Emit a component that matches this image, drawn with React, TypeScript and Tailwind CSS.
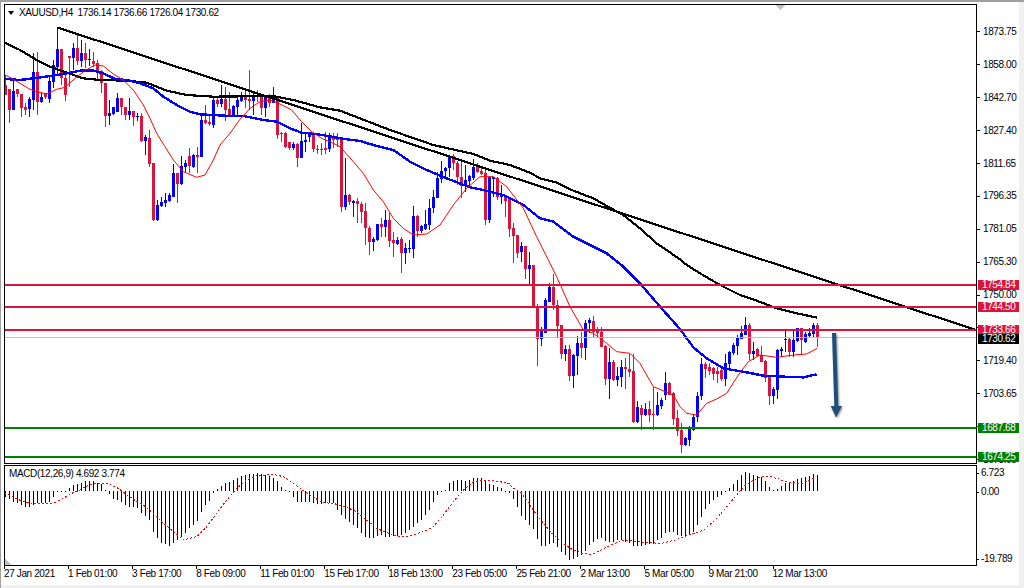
// XAUUSD H4 chart window. Candle and line data were read off the 3x crops, so every
// series keeps those crop coordinates and is shifted to the page through its offset.
type Candle = [number, number, number, number, 'r' | 'b'];

const CRIMSON = '#dc143c';
const BLUE = '#0000ff';

// top of body, bottom of body, high, low, colour
const CANDLES_A: Candle[] = [
  [255,285,225,285,'r'],[268,330,268,368,'r'],[272,330,240,330,'b'],[268,282,268,290,'r'],[282,325,282,350,'r'],
  [322,330,310,345,'r'],[298,328,290,350,'b'],[216,300,160,330,'b'],[216,305,155,345,'r'],[292,305,280,310,'b'],
  [280,292,278,298,'r'],[244,298,230,310,'b'],[196,245,180,265,'b'],[148,200,82,225,'b'],[148,235,148,255,'r'],
  [235,285,220,302,'r'],[168,173,168,262,'r'],[143,175,130,210,'b'],[143,182,105,195,'r'],[158,182,120,200,'b'],
  [158,180,130,205,'r'],[177,180,148,198,'b'],[182,192,155,200,'r'],[190,212,180,240,'r'],[212,250,210,280,'r'],
  [250,348,250,380,'r'],[340,348,300,375,'b'],[320,342,320,345,'b'],[293,335,278,335,'b'],[293,320,293,345,'r'],
  [320,345,320,360,'r'],[332,345,295,360,'b'],[333,350,333,378,'r'],[347,350,340,362,'b'],[347,422,340,425,'r'],
  [412,422,405,465,'b'],[415,492,390,500,'r'],[490,660,490,662,'r'],[615,660,600,662,'b'],[605,618,590,622,'b'],
  [600,610,578,620,'b'],[585,603,580,605,'b'],[520,590,492,590,'b'],[518,552,518,608,'r'],[497,552,467,555,'b'],
  [488,500,480,515,'b'],[468,498,445,518,'r'],[465,500,462,505,'b'],[465,470,440,520,'r'],[360,470,345,472,'b'],
  [360,368,315,372,'r'],[365,372,345,378,'r'],[300,375,290,385,'b'],[300,312,290,322,'r'],[298,312,255,322,'b'],
  [298,330,262,362,'r'],[328,348,275,350,'r'],[318,348,315,350,'b'],[300,320,290,345,'b'],[286,302,275,305,'b'],
  [285,300,268,325,'r'],[297,302,210,330,'r'],[285,302,275,345,'b'],[285,288,270,305,'r'],[285,323,285,345,'r'],
  [290,323,285,350,'b'],[290,308,283,320,'r'],[292,308,262,310,'b'],[292,405,292,418,'r'],[400,403,395,425,'r'],
  [400,442,395,445,'r'],[425,445,425,450,'r'],[432,445,425,450,'b'],[432,475,430,500,'r'],[422,475,368,475,'b'],
  [420,425,395,455,'b'],[400,412,395,425,'b'],[400,447,395,455,'r'],[446,450,435,462,'r'],[448,450,430,465,'r'],
  [445,450,395,462,'r'],[408,447,400,455,'b'],[415,420,400,445,'r'],[415,420,400,440,'r'],
];
const CANDLES_B: Candle[] = [
  [30,232,25,245,'r'],[195,232,85,240,'b'],[195,215,192,225,'r'],[212,218,210,262,'b'],[213,222,205,280,'r'],
  [222,245,215,280,'r'],[243,295,218,345,'r'],[294,335,288,375,'r'],[327,335,320,362,'b'],[283,330,283,332,'b'],
  [283,290,265,320,'r'],[270,290,240,320,'b'],[270,333,248,350,'r'],[330,340,305,380,'r'],[330,342,322,345,'b'],
  [328,368,322,430,'r'],[355,368,340,402,'b'],[355,358,330,368,'b'],[258,356,228,385,'b'],[258,303,255,320,'r'],
  [288,303,285,310,'b'],[282,296,240,300,'b'],[235,285,208,300,'b'],[202,235,180,248,'b'],[145,205,125,205,'b'],
  [122,147,93,160,'b'],[114,122,112,140,'b'],[78,115,75,140,'b'],[78,100,72,120,'r'],[100,140,92,165,'r'],
  [140,168,92,205,'r'],[150,167,105,185,'b'],[138,152,135,170,'b'],[110,145,87,150,'b'],[106,125,100,130,'r'],
  [122,132,112,135,'r'],[130,270,110,285,'r'],[142,270,140,280,'b'],[142,146,140,200,'b'],[143,200,140,210,'r'],
  [197,200,165,222,'b'],[197,212,197,260,'r'],[208,297,208,320,'r'],[295,317,280,398,'r'],[315,368,315,385,'r'],
  [348,365,335,395,'b'],[348,416,348,447,'r'],[405,416,365,465,'b'],[405,530,405,530,'r'],[528,626,522,708,'r'],
  [596,626,590,648,'b'],[510,608,505,610,'b'],[472,515,458,515,'b'],[472,525,432,540,'r'],[525,588,510,620,'r'],
  [585,672,585,687,'r'],[657,672,645,692,'b'],[657,738,645,752,'r'],[675,738,672,773,'b'],[640,678,618,735,'b'],
  [640,653,605,685,'r'],[580,655,570,690,'b'],[570,580,565,608,'b'],[573,605,558,625,'r'],[603,608,590,625,'r'],
  [605,650,590,650,'r'],[648,746,645,765,'r'],[697,748,655,806,'b'],[697,750,690,752,'r'],[738,750,712,768,'b'],
  [712,740,690,770,'b'],[712,718,685,778,'r'],[717,725,672,740,'r'],[722,876,672,880,'r'],[832,876,812,878,'b'],
  [835,855,825,900,'r'],[838,855,818,858,'b'],[838,855,812,875,'r'],[852,855,770,900,'r'],[825,855,785,858,'b'],
  [810,827,805,838,'b'],[760,795,727,810,'b'],[760,795,755,795,'r'],[790,867,787,885,'r'],[865,903,840,918,'r'],
];
const CANDLES_C: Candle[] = [
  [510,555,488,578,'r'],[535,555,530,558,'b'],[500,540,498,558,'b'],[470,510,465,513,'b'],[408,472,395,485,'b'],
  [312,408,295,420,'b'],[312,328,305,355,'r'],[322,332,310,345,'r'],[325,342,320,360,'r'],[333,342,320,368,'r'],
  [330,358,320,362,'r'],[310,358,282,378,'b'],[275,312,272,325,'b'],[255,278,250,285,'b'],[235,258,225,285,'b'],
  [220,236,198,238,'b'],[195,224,170,225,'b'],[195,282,190,300,'r'],[272,282,245,300,'b'],[268,288,265,290,'r'],
  [285,305,258,305,'r'],[302,355,300,365,'r'],[350,408,350,435,'r'],[388,408,380,432,'b'],[270,390,268,418,'b'],
  [268,272,262,290,'b'],[238,241,207,275,'b'],[238,275,230,290,'r'],[240,275,212,290,'b'],[205,242,205,245,'b'],
  [205,240,205,285,'r'],[222,245,215,248,'b'],[220,228,205,235,'b'],[195,222,188,235,'b'],[195,235,190,260,'r'],
];

const HIST_A = [
  112,118,125,130,135,140,140,135,130,130,
  128,125,110,96,94,94,85,75,72,68,
  64,64,64,68,72,90,102,118,120,125,
  135,140,142,145,158,168,180,215,235,248,
  252,258,250,240,232,220,205,195,182,155,
  135,122,100,86,78,68,65,60,55,48,
  45,42,42,40,42,45,48,55,62,80,
  90,96,110,125,125,125,125,130,133,133,
  130,128,130,150,165,178,185,195,205,220,
  232,233,233,228,226,230,230,228,228,225,
  220,210,200,190,180,165,150,125,105,94,
  90,70,62,60,60,62,60,55,55,55,
  60,72,75,80,85,92,100,
];
const HIST_B = [
  118,140,168,180,195,207,237,258,258,252,
  250,260,275,285,300,298,290,285,272,255,
  245,238,235,243,245,245,240,240,245,250,
  258,258,258,255,252,252,240,235,220,215,
  215,225,228,228,222,215,195,170,148,133,
  120,112,105,94,83,72,60,45,36,40,
  44,48,50,62,80,90,86,77,70,67,
  63,57,55,52,48,42,44,
];

function pts(list: number[][], ox: number, oy: number): string {
  return list.map(([x, y]) => `${ox + x / 3},${oy + y / 3}`).join(' ');
}

const EMA_FAST = [
  pts([[15,225],[35,235],[60,250],[90,268],[110,275],[140,282],[170,268],[195,262],[225,235],[255,212],[285,195],[310,198],[340,222],[370,240],[400,270],[430,315],[450,355],[470,400],[495,440],[520,480],[550,515],[590,532],[615,525],[640,480],[660,435],[690,400],[720,358],[750,325],[780,305],[810,300],[840,312],[875,330],[905,365],[935,395],[965,415],[1000,430],[1020,440]], 0, 0),
  pts([[40,95],[70,130],[100,180],[130,215],[160,265],[190,295],[220,315],[260,312],[300,285],[340,225],[380,175],[420,140],[460,140],[500,170],[550,235],[590,320],[610,360],[650,440],[690,530],[730,600],[760,610],[800,640],[830,665],[870,670],[900,700],[940,770],[1000,795],[1020,830]], 340, 130),
  pts([[20,460],[50,465],[80,430],[110,417],[140,400],[175,345],[205,305],[240,285],[290,292],[340,285],[380,282],[412,265]], 680, 260),
].join(' ');

const EMA_MID = [
  pts([[15,237],[60,240],[100,235],[150,228],[190,222],[240,212],[280,212],[310,220],[345,237],[380,240],[420,250],[460,265],[490,290],[530,315],[570,335],[600,343],[690,348],[730,348],[790,360],[830,365],[870,385],[905,398],[945,402],[985,408],[1020,415]], 0, 0),
  pts([[60,33],[100,45],[160,60],[210,95],[260,120],[320,145],[390,172],[430,180],[490,195],[550,225],[600,265],[640,275],[700,320],[750,345],[800,370],[850,410],[900,460],[960,530],[1020,597]], 340, 130),
  pts([[40,262],[80,295],[130,325],[200,337],[250,347],[310,350],[370,352],[410,343]], 680, 260),
].join(' ');

const EMA_SLOW = [
  pts([[15,128],[60,150],[110,180],[150,200],[200,218],[250,235],[300,240],[380,242],[440,248],[500,272],[560,285],[640,290],[820,288],[880,300],[960,322],[1020,332]], 0, 0),
  pts([[150,0],[280,45],[400,72],[450,92],[510,105],[570,128],[600,145],[650,158],[700,182],[760,205],[800,228],[850,255],[900,295],[950,340],[1020,388]], 340, 130),
  pts([[20,15],[60,40],[120,75],[180,105],[230,122],[290,145],[350,160],[412,173]], 680, 260),
].join(' ');

const SIGNAL = [
  pts([[14,98],[40,112],[70,125],[100,130],[140,132],[165,128],[190,115],[215,100],[240,90],[265,75],[290,70],[325,72],[350,82],[375,100],[400,118],[430,135],[460,160],[490,190],[520,215],[550,240],[590,230],[620,200],[650,160],[680,120],[710,85],[740,60],[770,47],[820,43],[850,50],[880,70],[910,92],[940,112],[970,128],[1000,130],[1040,142],[1070,155],[1100,180],[1130,205],[1160,218],[1200,230],[1230,228],[1270,215],[1300,200],[1330,165],[1360,125],[1390,90],[1420,65],[1460,60],[1500,65],[1530,72]], 0, 460),
  pts([[0,82],[30,100],[60,145],[90,185],[120,220],[150,248],[180,268],[210,280],[240,283],[270,268],[300,253],[340,240],[370,244],[410,248],[450,250],[490,240],[530,225],[575,210],[610,180],[640,145],[670,110],[700,75],[740,52],[770,48],[800,57],[830,68],[870,70],[905,55]], 512, 460),
].join(' ');

// empty entries sit fully behind a level tag in the screenshot
const PRICES = [
  '1873.75','1858.00','1842.70','1827.40','1811.65','1796.35','1781.05',
  '1765.30','1750.00','','1719.40','1703.65','','1673.05',
];
const TIMES = [
  '27 Jan 2021','1 Feb 01:00','3 Feb 17:00','8 Feb 09:00','11 Feb 01:00','15 Feb 17:00','18 Feb 13:00',
  '23 Feb 05:00','25 Feb 21:00','2 Mar 13:00','5 Mar 05:00','9 Mar 21:00','12 Mar 13:00',
];

function CandleRows({ data, first, oy }: { data: Candle[]; first: number; oy: number }) {
  return (
    <>
      {data.map(([top, bottom, high, low, c], n) => {
        const x = 5 + 4 * (first + n);
        const fill = c === 'r' ? CRIMSON : BLUE;
        const bodyTop = Math.round(oy + top / 3);
        const bodyBottom = Math.round(oy + bottom / 3);
        const hi = Math.round(oy + high / 3);
        const lo = Math.round(oy + low / 3);
        return (
          <g key={n} fill={fill}>
            <rect x={x} y={hi} width={1} height={Math.max(lo - hi, 1)} />
            <rect x={x - 1} y={bodyTop} width={3} height={Math.max(bodyBottom - bodyTop, 1)} />
          </g>
        );
      })}
    </>
  );
}

function Level({ y, color }: { y: number; color: string }) {
  return <rect x={5} y={y} width={971} height={2} fill={color} />;
}

function PriceChart() {
  return (
    <svg viewBox="5 5 971 458" className="block h-[458px] w-[971px]" shapeRendering="crispEdges">
      <CandleRows data={CANDLES_A} first={0} oy={0} />
      <CandleRows data={CANDLES_B} first={84} oy={130} />
      <CandleRows data={CANDLES_C} first={169} oy={260} />
      <polyline points={EMA_SLOW} fill="none" stroke="#000000" strokeWidth={2.2} />
      <polyline points={EMA_MID} fill="none" stroke={BLUE} strokeWidth={2.4} />
      <polyline points={EMA_FAST} fill="none" stroke="#ff0000" strokeWidth={1} shapeRendering="auto" />
      <rect x={5} y={337} width={971} height={1} fill="#c0c0c0" />
      <line x1={57.5} y1={27.5} x2={976} y2={330} stroke="#000000" strokeWidth={2.2} />
      <Level y={284} color={CRIMSON} />
      <Level y={306} color={CRIMSON} />
      <Level y={329} color={CRIMSON} />
      <Level y={427} color="#008000" />
      <Level y={456} color="#008000" />
      {/* hand-drawn down arrow */}
      <g shapeRendering="geometricPrecision" className="drop-shadow-[1px_1px_1px_rgba(0,0,0,0.45)]">
        <polygon
          points="832,333 836,333 838.3,406 842,406 836,417.5 830.7,406 834.3,406"
          fill="#1f4e79"
        />
      </g>
      {/* chart shift marker */}
      <polygon points="776,5 785,5 780.5,10" fill="#c0c0c0" />
    </svg>
  );
}

function MacdChart() {
  const bars = [...HIST_A, ...HIST_B];
  return (
    <svg viewBox="5 466 971 99" className="block h-[99px] w-[971px]" shapeRendering="crispEdges">
      {bars.map((v, i) => {
        const end = Math.round(460 + v / 3);
        const zero = 491;
        return (
          <rect
            key={i}
            x={5 + 4 * i}
            y={Math.min(end, zero)}
            width={1}
            height={Math.max(Math.abs(end - zero), 1)}
            fill="#000000"
          />
        );
      })}
      <polyline points={SIGNAL} fill="none" stroke="#ff0000" strokeWidth={1} strokeDasharray="2 2" />
      <polygon points="5,559 5,565 11,565" fill="#c0c0c0" />
    </svg>
  );
}

function ValueTag({ top, bg, children }: { top: number; bg: string; children: string }) {
  return (
    <div
      className="absolute left-[1px] flex h-[10px] w-[41px] items-center pl-[4px] text-white"
      style={{ top, backgroundColor: bg }}
    >
      {children}
    </div>
  );
}

export default function App() {
  return (
    <div className="flex h-[588px] w-[1024px] flex-col overflow-hidden bg-[#f0f0f0] font-['Liberation_Sans',sans-serif] text-[10px] leading-none tracking-[-0.38px] text-black">
      <div className="h-[2px] shrink-0 bg-[#a0a0a0]" />
      <div className="flex min-h-0 flex-1">
        <div className="w-[1px] shrink-0 bg-[#a0a0a0]" />
        <div className="h-[583px] w-[1018px] bg-white pl-[3px] pt-[2px]">
          {/* main window */}
          <div className="flex h-[460px]">
            <div className="relative h-[460px] w-[973px] shrink-0 border border-black">
              <PriceChart />
              <div className="absolute left-[3px] top-[3px] flex items-center gap-[5px]">
                <span className="h-0 w-0 border-x-[3.5px] border-t-[4px] border-x-transparent border-t-black" />
                <span className="whitespace-pre">XAUUSD,H4  1736.14 1736.66 1726.04 1730.62</span>
              </div>
            </div>
            <div className="relative w-[42px] shrink-0 pt-[11.5px]">
              {PRICES.map((p, i) => (
                <div key={i} className="flex h-[32.9px] items-center">
                  <span className="h-px w-[3px] bg-black" />
                  <span className="ml-[3px]">{p}</span>
                </div>
              ))}
              <ValueTag top={276} bg={CRIMSON}>1754.84</ValueTag>
              <ValueTag top={298} bg={CRIMSON}>1744.50</ValueTag>
              <ValueTag top={321} bg={CRIMSON}>1733.66</ValueTag>
              <ValueTag top={330} bg="#000000">1730.62</ValueTag>
              <ValueTag top={419} bg="#008000">1687.68</ValueTag>
              <ValueTag top={448} bg="#008000">1674.25</ValueTag>
            </div>
          </div>
          {/* MACD subwindow */}
          <div className="mt-px flex h-[101px]">
            <div className="relative h-[101px] w-[973px] shrink-0 border border-black">
              <MacdChart />
              <div className="absolute left-[4px] top-[3px]">MACD(12,26,9) 4.692 3.774</div>
            </div>
            <div className="w-[42px] shrink-0 pt-[2px]">
              <div className="flex h-[12px] items-center">
                <span className="h-px w-[2px] bg-black" />
                <span className="ml-[2px]">6.723</span>
              </div>
              <div className="mt-[7px] flex h-[12px] items-center">
                <span className="h-px w-[2px] bg-black" />
                <span className="ml-[2px]">0.00</span>
              </div>
              <div className="mt-[55px] flex h-[12px] items-center">
                <span className="h-px w-[2px] bg-black" />
                <span className="ml-[2px]">-19.789</span>
              </div>
            </div>
          </div>
          {/* time axis */}
          <div className="flex">
            {TIMES.map((t) => (
              <div key={t} className="w-[64.05px] shrink-0">
                <div className="h-[3px] w-px bg-black" />
                <div className="whitespace-nowrap">{t}</div>
              </div>
            ))}
          </div>
        </div>
      </div>
    </div>
  );
}
